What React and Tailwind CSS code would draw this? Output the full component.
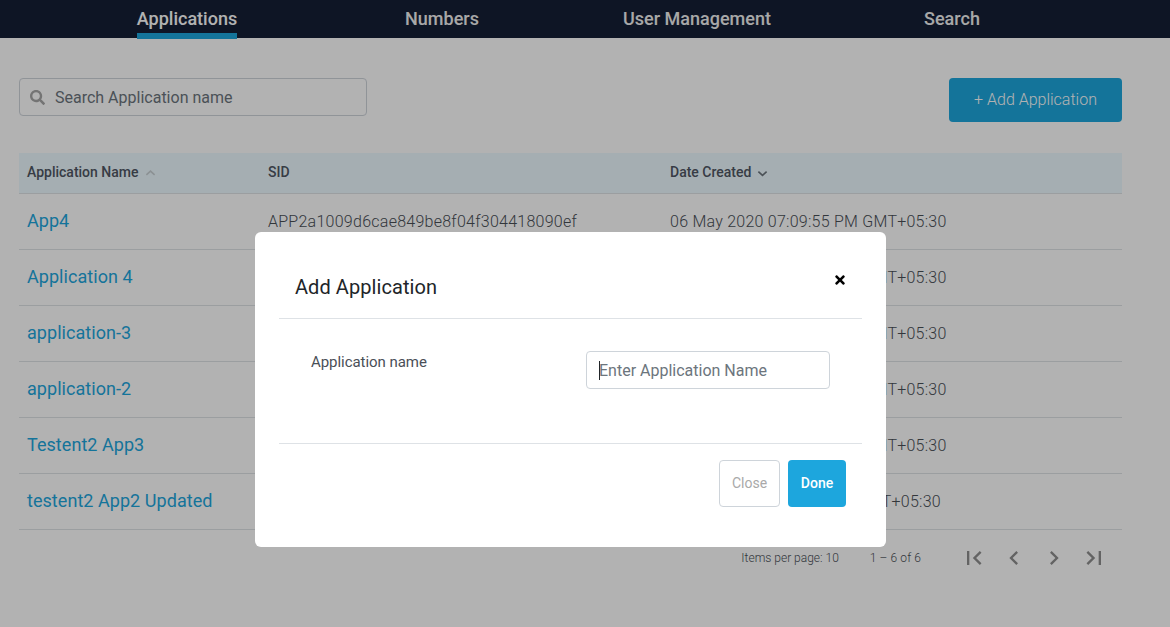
import React from 'react'
import { FaSearch, FaTimes } from 'react-icons/fa'

// only the first SID can be read, the modal covers the others
const apps = [
  { name: 'App4', sid: 'APP2a1009d6cae849be8f04f304418090ef', date: '06 May 2020 07:09:55 PM GMT+05:30' },
  { name: 'Application 4', date: '06 May 2020 07:09:15 PM GMT+05:30' },
  { name: 'application-3', date: '06 May 2020 06:48:32 PM GMT+05:30' },
  { name: 'application-2', date: '06 May 2020 06:47:58 PM GMT+05:30' },
  { name: 'Testent2 App3', date: '05 May 2020 05:22:40 PM GMT+05:30' },
  { name: 'testent2 App2 Updated', date: '29 Apr 2020 05:21:07 PM GMT+05:30' },
]

const navItems = ['Applications', 'Numbers', 'User Management', 'Search']

function PagerIcon({ d }) {
  return (
    <button className="w-10 h-10 flex items-center justify-center text-[#8f8f8f]">
      <svg width="28" height="28" viewBox="0 0 24 24" fill="currentColor">
        <path d={d} />
      </svg>
    </button>
  )
}

function Chevron({ up, color }) {
  return (
    <svg width="11" height="12" viewBox="0 0 12 12" fill="none" stroke={color} strokeWidth="1.8" className="ml-[6px]">
      <path d={up ? 'M1.5 8 6 4l4.5 4' : 'M1.5 4.5 6 8.500l4.500-4'} />
    </svg>
  )
}

export default function App() {
  return (
    <div className="relative min-h-screen bg-white font-['Roboto',sans-serif] text-[#4a4f57]">
      <nav className="h-[38px] bg-[#151f36] pl-[59.5px] flex">
        {navItems.map((item, i) => (
          <div key={item} className="w-[255px] flex justify-center">
            <a className={`h-[39px] pt-[7px] text-[18px] leading-[24px] font-medium ${i === 0 ? 'text-white border-b-[6px] border-[#1da6dd]' : 'text-[#f1f1f1]'}`}>
              {item}
            </a>
          </div>
        ))}
      </nav>

      <main className="pl-[19px] pr-[48px] pt-[40px]">
        <div className="flex justify-between items-start">
          <div className="w-[348px] h-[38px] border border-[#ced4da] rounded flex items-center pl-[10px]">
            <FaSearch className="text-[15px] text-[#a6a6a6]" />
            <input
              className="ml-[10px] flex-1 pt-[2px] text-[16px] outline-none placeholder:text-[#6c757d] bg-transparent"
              placeholder="Search Application name"
            />
          </div>
          <button className="w-[173px] h-[44px] bg-[#1da6dd] rounded text-[16px] font-light text-white">
            + Add Application
          </button>
        </div>

        <table className="mt-[31px] w-full table-fixed border-collapse">
          <thead>
            <tr className="h-[40px] bg-[#edfaff] border-b border-[#dee2e6] text-[14px] text-[#4f5663] text-left">
              <th className="w-[241px] pl-2 font-medium">
                <span className="flex items-center">Application Name <Chevron up color="#c8d0d4" /></span>
              </th>
              <th className="w-[402px] pl-2 font-medium">SID</th>
              <th className="pl-2 font-medium">
                <span className="flex items-center">Date Created <Chevron color="#6c757d" /></span>
              </th>
            </tr>
          </thead>
          <tbody>
            {apps.map((app) => (
              <tr key={app.name} className="h-[56px] border-b border-[#dee2e6]">
                <td className="pl-2 text-[18px] tracking-[0.05px] text-[#1da6dd] pb-[1px]">{app.name}</td>
                <td className="pl-2 pt-[2px] text-[16px] tracking-[0.26px] font-light">{app.sid}</td>
                <td className="pl-2 pt-[2px] text-[16px] tracking-[0.25px] font-light">{app.date}</td>
              </tr>
            ))}
          </tbody>
        </table>

        <div className="flex items-center justify-end h-[56px] pr-[8px] text-[12px] font-light">
          <span className="pt-[1px]">Items per page: 10</span>
          <span className="pt-[1px] ml-[31px] mr-[33px] tracking-[0.1px]">1 – 6 of 6</span>
          <PagerIcon d="M18.41 16.59L13.82 12l4.59-4.59L17 6l-6 6 6 6zM6 6h2v12H6z" />
          <PagerIcon d="M15.41 7.41L14 6l-6 6 6 6 1.41-1.41L10.83 12z" />
          <PagerIcon d="M10 6L8.59 7.41 13.17 12l-4.58 4.59L10 18l6-6z" />
          <PagerIcon d="M5.59 7.41L10.18 12l-4.59 4.59L7 18l6-6-6-6zM16 6h2v12h-2z" />
        </div>
      </main>

      <div className="absolute inset-0 bg-black/30" />

      <div className="absolute left-[255px] top-[232px] w-[631px] h-[315px] bg-white rounded-md px-[24px]">
        <div className="relative h-[87px] border-b border-[#dee2e6] pt-[41px] pl-[16px]">
          <h2 className="text-[20px] leading-[28px] tracking-[0.07px] text-[#212529]">Add Application</h2>
          <FaTimes className="absolute right-[15px] top-[41px] text-[14px] text-black" />
        </div>
        <div className="h-[125px] border-b border-[#dee2e6] flex items-start pt-[32px] pl-[32px]">
          <label className="w-[275px] text-[15px] leading-[22px] tracking-[-0.05px] text-[#4a4f57]">Application name</label>
          <div className="relative">
            <input
              className="w-[244px] h-[38px] border border-[#ced4da] rounded px-3 text-[16px] outline-none placeholder:text-[#6c757d]"
              placeholder="Enter Application Name"
            />
            <span className="absolute left-[13px] top-[10px] w-px h-[19px] bg-[#212529]" />
          </div>
        </div>
        <div className="flex justify-end pt-[16px] pr-[16px] gap-2">
          <button className="w-[61px] h-[47px] border border-[#ced4da] rounded text-[14px] text-[#a9a9a9]">Close</button>
          <button className="w-[58px] h-[47px] bg-[#1da6dd] rounded text-[14px] font-medium text-white">Done</button>
        </div>
      </div>
    </div>
  )
}
